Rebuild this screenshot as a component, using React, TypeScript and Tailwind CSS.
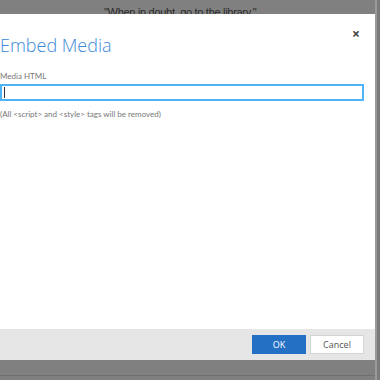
export default function App() {
  return (
    <div
      className="relative w-[380px] h-[380px] overflow-hidden bg-[#808080]"
      style={{ fontFamily: '"Open Sans", "Noto Sans", sans-serif' }}
    >
      {/* page behind the overlay */}
      <div className="pt-[4px] pl-[104px] text-[11px] leading-[16px] tracking-[-0.3px] text-[#2b2b2b]" style={{ fontFamily: '"Liberation Sans", sans-serif' }}>
        "When in doubt, go to the library."
      </div>
      <div className="absolute left-0 right-0 top-[375px] h-px bg-[#6f6f6f]" />
      <div className="absolute right-0 top-0 w-[5px] h-[380px] bg-[#7a7a7a]">
        <div className="w-[2px] h-full bg-[#9a9a9a]" />
      </div>

      {/* dialog */}
      <div className="absolute left-0 top-[14px] w-[375px] h-[346px] bg-white flex flex-col">
        <div className="flex-1 relative">
          <button className="absolute left-[352px] top-[13px] text-[14px] leading-[14px] font-bold text-[#444]">
            ×
          </button>
          <h1 className="pt-[19px] text-[18px] leading-[24px] font-light text-[#3a8ad9]">
            Embed Media
          </h1>
          <div className="mt-[14px] text-[8px] leading-[11px] text-[#777]" style={{ fontFamily: 'Lato, sans-serif' }}>
            Media HTML
          </div>
          <div className="mt-[2px] w-[364px] h-[17px] border-2 border-[#4fb4f7] flex items-center pl-[2px]">
            <div className="w-px h-[11px] bg-[#333]" />
          </div>
          <div className="mt-[8px] text-[8px] leading-[11px] text-[#777]" style={{ fontFamily: 'Lato, sans-serif' }}>
            (All &lt;script&gt; and &lt;style&gt; tags will be removed)
          </div>
        </div>
        <div className="h-[31px] bg-[#e6e6e6] flex items-start justify-end gap-[4px] pr-[11px] pt-[6px]">
          <button className="w-[54px] h-[19px] bg-[#2370c5] text-white text-[9px] leading-[19px]">
            OK
          </button>
          <button className="w-[54px] h-[19px] bg-white border border-[#d4d4d4] text-[#555] text-[9px] leading-[17px]">
            Cancel
          </button>
        </div>
      </div>
    </div>
  );
}
